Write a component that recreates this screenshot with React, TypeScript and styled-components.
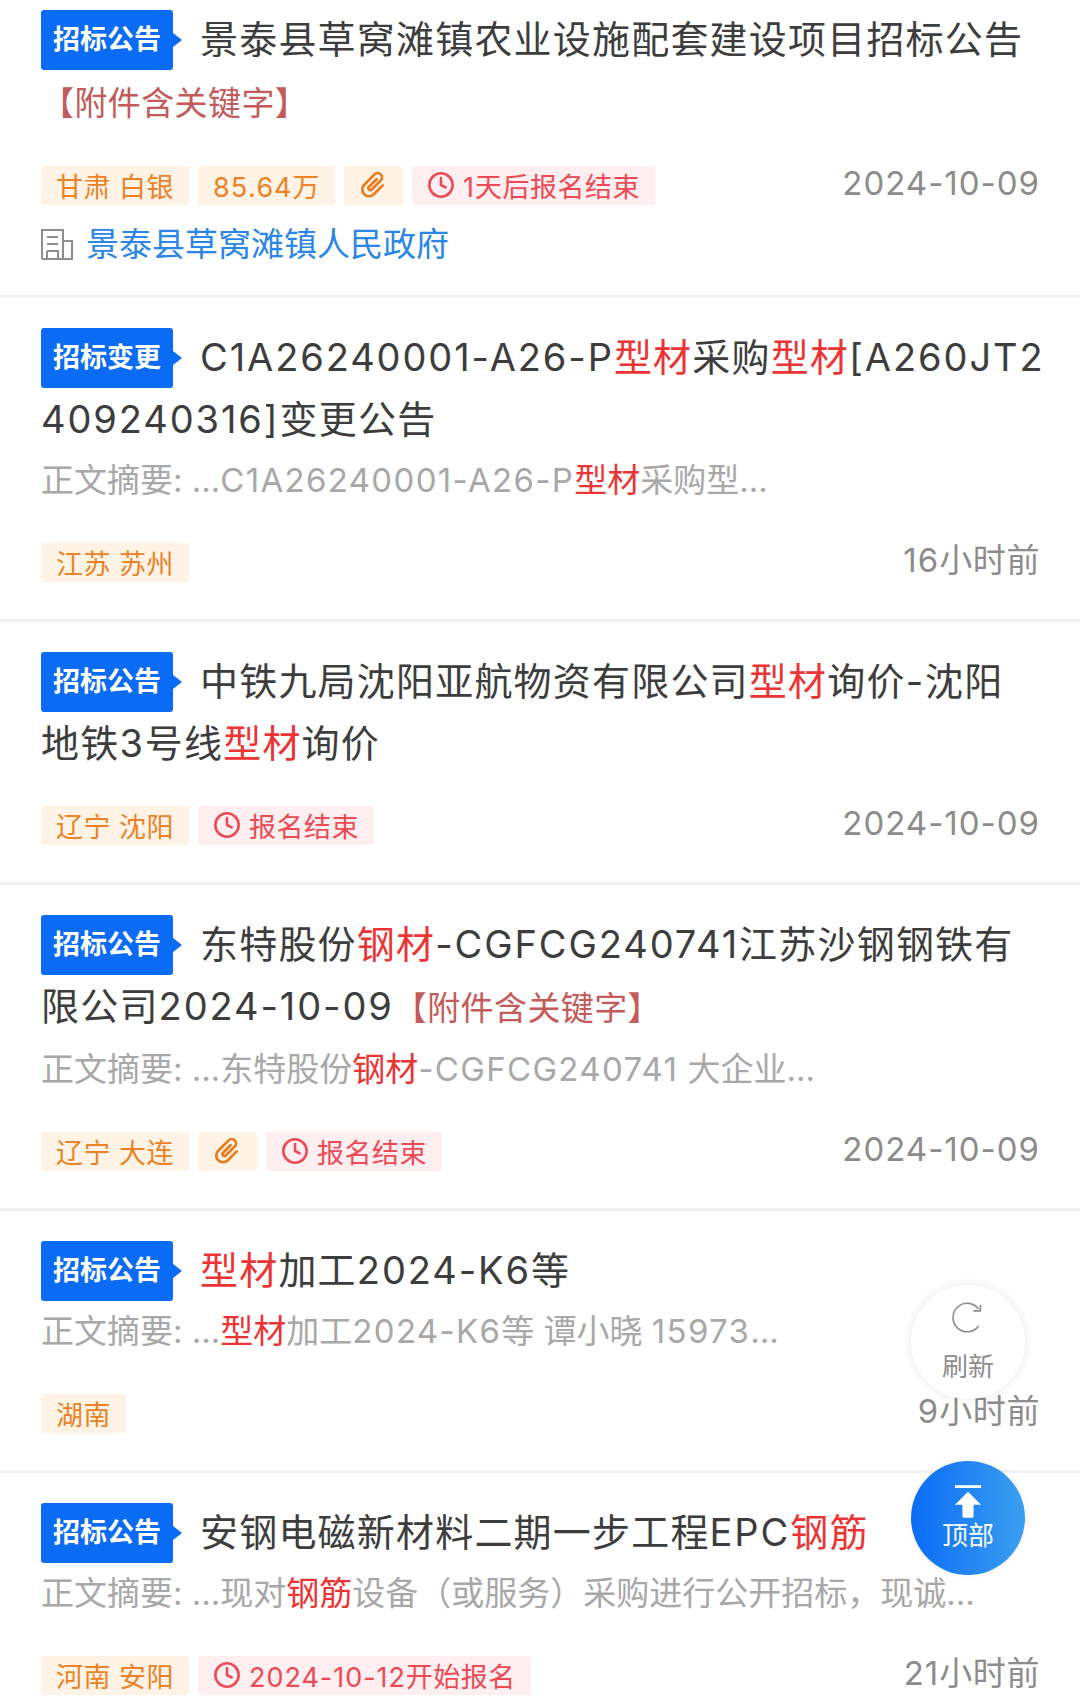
import React from "react";
import styled, { createGlobalStyle } from "styled-components";
import { Clock } from "lucide-react";

const GlobalStyle = createGlobalStyle`
  html, body {
    margin: 0;
    padding: 0;
    background: #fff;
  }
  body {
    font-family: Inter, "Noto Sans CJK SC", sans-serif;
  }
`;

const Page = styled.div`
  position: relative;
  width: 1080px;
  height: 1706px;
  overflow: hidden;
  background: #fff;
`;

// the list is scrolled a little, so the first card starts above the top edge
const List = styled.div`
  margin-top: -20px;
`;

const Card = styled.div`
  padding: 28px 40px 0 41px;
  border-bottom: 3px solid #f1f1f1;
`;

const Title = styled.div`
  font-size: 38px;
  line-height: 62px;
  color: #3d3d3d;
  letter-spacing: 1.2px;
  white-space: pre;
`;

const Badge = styled.span`
  position: relative;
  display: inline-flex;
  align-items: center;
  justify-content: center;
  width: 132px;
  height: 60px;
  margin-right: 27px;
  margin-top: 2px;
  border-radius: 3px;
  background: #0a6cf5;
  color: #fff;
  font-size: 27px;
  font-weight: 600;
  letter-spacing: 0;
  vertical-align: top;

  &::after {
    content: "";
    position: absolute;
    top: 23px;
    right: -9px;
    border-left: 9px solid #0a6cf5;
    border-top: 7px solid transparent;
    border-bottom: 7px solid transparent;
  }
`;

const Hit = styled.span`
  color: #ec3434;
`;

// digits and latin letters run wider than the CJK text around them
const Latin = styled.span`
  letter-spacing: 0.05em;
`;

const AttachNote = styled.span`
  color: #c55a5a;
  font-size: 33px;
  letter-spacing: 0.4px;
`;

const Summary = styled.div`
  font-size: 33px;
  line-height: 61px;
  color: #a8a8a8;
  white-space: nowrap;

  ${Latin} {
    letter-spacing: 0.04em;
  }
`;

const MetaRow = styled.div`
  display: flex;
  align-items: center;
  justify-content: space-between;
  margin-top: 30px;
  padding-bottom: 36px;
`;

const Tags = styled.div`
  display: flex;
  gap: 9px;
`;

const Tag = styled.span<{ $red?: boolean }>`
  display: inline-flex;
  align-items: center;
  gap: 8px;
  height: 39px;
  padding: 0 15px;
  border-radius: 3px;
  font-size: 27px;
  letter-spacing: 0.5px;
  white-space: pre;
  background: ${(p) => (p.$red ? "#ffeff0" : "#fff3e6")};
  color: ${(p) => (p.$red ? "#ee4a55" : "#ec8226")};

  ${Latin} {
    letter-spacing: 0.035em;
  }
`;

const ClipTag = styled(Tag)`
  padding: 0 14px;
`;

const Stamp = styled.span`
  font-size: 33px;
  line-height: 38px;
  color: #8c8c8c;
  letter-spacing: 0.6px;
  padding-bottom: 4px;
  white-space: nowrap;

  ${Latin} {
    letter-spacing: 0.03em;
  }
`;

const Org = styled.div`
  display: flex;
  align-items: center;
  gap: 13px;
  margin-top: -18px;
  padding-bottom: 31px;
  font-size: 33px;
  line-height: 40px;
  color: #2a86e8;
`;

const Fab = styled.div<{ $top: number; $primary?: boolean }>`
  position: absolute;
  left: 911px;
  top: ${(p) => p.$top}px;
  width: 114px;
  height: 114px;
  border-radius: 50%;
  display: flex;
  flex-direction: column;
  align-items: center;
  justify-content: center;
  gap: ${(p) => (p.$primary ? 2 : 18)}px;
  font-size: 26px;
  line-height: 30px;
  background: ${(p) =>
    p.$primary ? "linear-gradient(90deg, #0a6cf5, #3a9ff0)" : "#fff"};
  color: ${(p) => (p.$primary ? "#fff" : "#8d8d8d")};
  box-shadow: ${(p) =>
    p.$primary ? "0 0 8px rgba(0,0,0,0.06)" : "0 0 6px 4px rgba(0,0,0,0.045)"};
`;

const ClipIcon = () => (
  <svg width="31" height="31" viewBox="-3 0 32 32" fill="none" stroke="#e97c20" strokeWidth="2.8" strokeLinecap="round">
    <path
      transform="rotate(45 13 15.5)"
      d="M20 9v13a7 7 0 0 1-14 0V7a4.5 4.5 0 0 1 9 0v13a2 2 0 0 1-4 0V9"
    />
  </svg>
);

const BuildingIcon = () => (
  <svg width="32" height="32" viewBox="0 0 32 32" fill="none" stroke="#8e8e8e" strokeWidth="2">
    <path d="M1 31V2h21v29M22 13h9v18H1" />
    <path d="M6 9h11M6 16h11M6 23h11v8M6 23v8" />
  </svg>
);

const RefreshIcon = () => (
  <svg width="32" height="32" viewBox="0 0 36 36" fill="none" stroke="#8d8d8d" strokeWidth="1.8">
    <path d="M30 27a16 16 0 1 1 0-19" />
    <path d="M32 3v7h-8" />
  </svg>
);

const TopIcon = () => (
  <svg width="28" height="34" viewBox="0 0 30 36" fill="#fff">
    <rect x="1" y="0" width="28" height="3" />
    <path d="M15 7 29 21H21V33a2 2 0 0 1-2 2H11a2 2 0 0 1-2-2V21H1Z" />
  </svg>
);

const latin = (text: string) =>
  text.split(/([A-Za-z0-9\-[\]]+)/).map((part, i) =>
    i % 2 ? <Latin key={i}>{part}</Latin> : <React.Fragment key={i}>{part}</React.Fragment>
  );

// text between | markers is a search hit
const marked = (text: string) =>
  text.split("|").map((part, i) =>
    i % 2 ? <Hit key={i}>{part}</Hit> : <React.Fragment key={i}>{latin(part)}</React.Fragment>
  );

interface Item {
  kind: string;
  title: string;
  note?: boolean;
  summary?: string;
  place: string;
  amount?: string;
  clip?: boolean;
  status?: string;
  time: string;
  org?: string;
}

const items: Item[] = [
  {
    kind: "招标公告",
    title: "景泰县草窝滩镇农业设施配套建设项目招标公告\n",
    note: true,
    place: "甘肃 白银",
    amount: "85.64万",
    clip: true,
    status: "1天后报名结束",
    time: "2024-10-09",
    org: "景泰县草窝滩镇人民政府",
  },
  {
    kind: "招标变更",
    title: "C1A26240001-A26-P|型材|采购|型材|[A260JT2\n409240316]变更公告",
    summary: "正文摘要: ...C1A26240001-A26-P|型材|采购型...",
    place: "江苏 苏州",
    time: "16小时前",
  },
  {
    kind: "招标公告",
    title: "中铁九局沈阳亚航物资有限公司|型材|询价-沈阳\n地铁3号线|型材|询价",
    place: "辽宁 沈阳",
    status: "报名结束",
    time: "2024-10-09",
  },
  {
    kind: "招标公告",
    title: "东特股份|钢材|-CGFCG240741江苏沙钢钢铁有\n限公司2024-10-09",
    note: true,
    summary: "正文摘要: ...东特股份|钢材|-CGFCG240741 大企业...",
    place: "辽宁 大连",
    clip: true,
    status: "报名结束",
    time: "2024-10-09",
  },
  {
    kind: "招标公告",
    title: "|型材|加工2024-K6等",
    summary: "正文摘要: ...|型材|加工2024-K6等 谭小晓 15973...",
    place: "湖南",
    time: "9小时前",
  },
  {
    kind: "招标公告",
    title: "安钢电磁新材料二期一步工程EPC|钢筋|",
    summary: "正文摘要: ...现对|钢筋|设备（或服务）采购进行公开招标，现诚...",
    place: "河南 安阳",
    status: "2024-10-12开始报名",
    time: "21小时前",
  },
];

const App: React.FC = () => (
  <Page>
    <GlobalStyle />
    <List>
      {items.map((item, i) => (
        <Card key={i}>
          <Title>
            <Badge>{item.kind}</Badge>
            {marked(item.title)}
            {item.note && <AttachNote>【附件含关键字】</AttachNote>}
          </Title>
          {item.summary && <Summary>{marked(item.summary)}</Summary>}
          <MetaRow>
            <Tags>
              <Tag>{item.place}</Tag>
              {item.amount && (
                <Tag>
                  <span>{latin(item.amount)}</span>
                </Tag>
              )}
              {item.clip && (
                <ClipTag>
                  <ClipIcon />
                </ClipTag>
              )}
              {item.status && (
                <Tag $red>
                  <Clock size={28} strokeWidth={2.2} />
                  <span>{latin(item.status)}</span>
                </Tag>
              )}
            </Tags>
            <Stamp>{latin(item.time)}</Stamp>
          </MetaRow>
          {item.org && (
            <Org>
              <BuildingIcon />
              {item.org}
            </Org>
          )}
        </Card>
      ))}
    </List>
    <Fab $top={1285}>
      <RefreshIcon />
      刷新
    </Fab>
    <Fab $top={1461} $primary>
      <TopIcon />
      顶部
    </Fab>
  </Page>
);

export default App;
